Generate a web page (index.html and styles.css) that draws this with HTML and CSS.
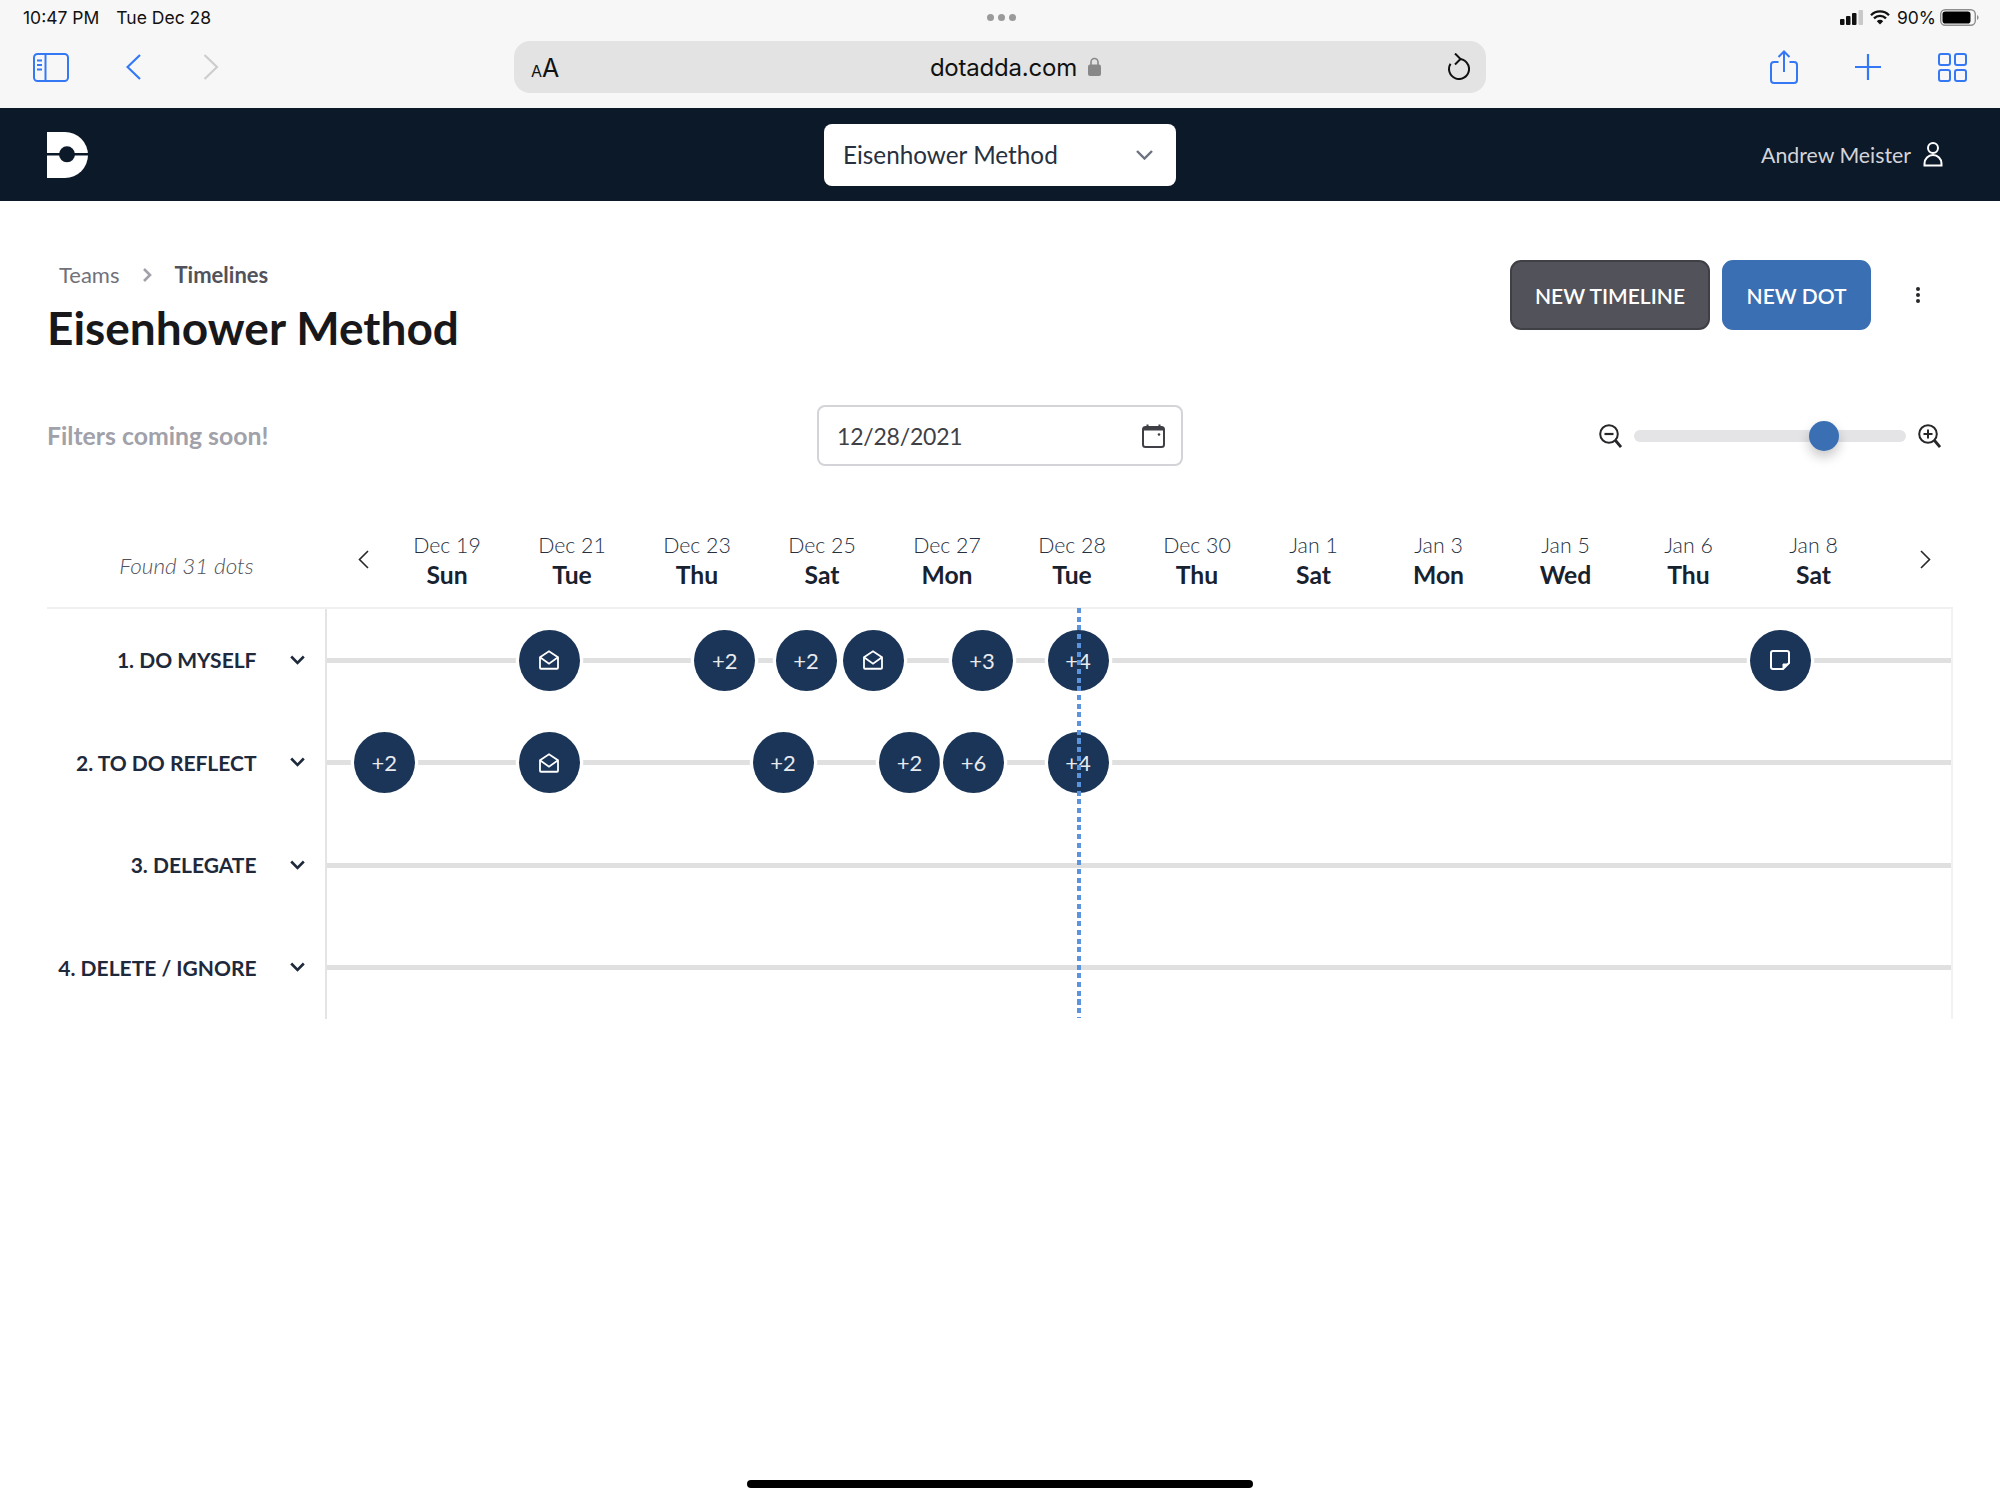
FILE: index.html
```html
<!DOCTYPE html>
<html lang="en">
<head>
<meta charset="utf-8">
<title>Eisenhower Method - DotAdda</title>
<link rel="stylesheet" href="styles.css">
</head>
<body>
<div class="page">
  <div class="chrome">
    <div class="status">
      <div class="status-left"><span>10:47 PM</span><span>Tue Dec 28</span></div>
      <div class="status-dots"><i></i><i></i><i></i></div>
      <div class="status-right">
        <svg class="ic-signal" viewBox="0 0 24 15"><rect x="0" y="9" width="4.5" height="6" rx="1" fill="#111"/><rect x="6" y="6" width="4.5" height="9" rx="1" fill="#111"/><rect x="12" y="3" width="4.5" height="12" rx="1" fill="#111"/><rect x="18.500" y="0" width="4.500" height="15" rx="1" fill="#c9c9c9"/></svg>
        <svg class="ic-wifi" viewBox="0 0 20 15"><path d="M1 5.200a12.700 12.700 0 0 1 18 0M4 8.400a8.400 8.400 0 0 1 12 0" fill="none" stroke="#111" stroke-width="2.300"/><path d="M6.800 11.200a4.500 4.500 0 0 1 6.400 0L10 14.600z" fill="#111"/></svg>
        <span class="battery-pct">90%</span>
        <svg class="ic-battery" viewBox="0 0 39 17"><rect x="0.700" y="0.700" width="34.600" height="15.600" rx="4.500" fill="none" stroke="#8e8e8e" stroke-width="1.400"/><rect x="2.500" y="2.500" width="28" height="12" rx="2.800" fill="#000"/><path d="M37 6v5a2.600 2.600 0 0 0 1.600-2.500A2.600 2.600 0 0 0 37 6z" fill="#8e8e8e"/></svg>
      </div>
    </div>
    <div class="toolbar">
      <div class="tools-left">
        <svg class="ic-sidebar" viewBox="0 0 36 29" fill="none" stroke="#3478f6" stroke-width="2"><rect x="1" y="1" width="34" height="27" rx="3.500"/><path d="M12.500 1v27"/><path d="M4 7.500h5M4 12h5M4 16.500h5" stroke-width="1.800"/></svg>
        <svg class="ic-back" viewBox="0 0 15 26" fill="none" stroke="#3478f6" stroke-width="2.200"><path d="M14 1 1.500 13 14 25"/></svg>
        <svg class="ic-forward" viewBox="0 0 16 26" fill="none" stroke="#cdcdcd" stroke-width="2.200"><path d="M1.500 1 14 13 1.500 25"/></svg>
      </div>
      <div class="urlbar">
        <span class="aa"><span class="aa-small">A</span><span class="aa-big">A</span></span>
        <span class="url"><span>dotadda.com</span>
          <svg class="ic-lock" viewBox="0 0 13 19"><path d="M3 8V5a3.500 3.500 0 0 1 7 0v3" fill="none" stroke="#888" stroke-width="1.600"/><rect x="0" y="7.500" width="13" height="11.500" rx="2" fill="#888"/></svg>
        </span>
        <svg class="ic-reload" viewBox="0 0 23 27" fill="none" stroke="#111" stroke-width="2"><path d="M12 6a10 10 0 1 1-8.500 4.800"/><path d="M8 0.500 13.500 6 8 11.500"/></svg>
      </div>
      <div class="tools-right">
        <svg class="ic-share" viewBox="0 0 28 34" fill="none" stroke="#3478f6" stroke-width="2"><path d="M8.500 12H4a3 3 0 0 0-3 3v15a3 3 0 0 0 3 3h20a3 3 0 0 0 3-3V15a3 3 0 0 0-3-3h-4.500"/><path d="M14 22V1.500M8.500 7 14 1.500 19.500 7"/></svg>
        <svg class="ic-plus" viewBox="0 0 26 26" fill="none" stroke="#3478f6" stroke-width="2.200"><path d="M13 0v26M0 13h26"/></svg>
        <svg class="ic-tabs" viewBox="0 0 29 29" fill="none" stroke="#3478f6" stroke-width="2"><rect x="1" y="1" width="11" height="11" rx="2"/><rect x="17" y="1" width="11" height="11" rx="2"/><rect x="1" y="17" width="11" height="11" rx="2"/><rect x="17" y="17" width="11" height="11" rx="2"/></svg>
      </div>
    </div>
  </div>

  <header class="nav">
    <div class="nav-left">
      <svg class="logo" viewBox="0 0 41 46"><path d="M0 0H18A23 23 0 0 1 18 46H0Z" fill="#fff"/><rect x="0" y="21" width="41" height="2.500" fill="#0c1929"/><circle cx="20" cy="22.300" r="8" fill="#0c1929"/></svg>
    </div>
    <div class="team-select"><span>Eisenhower Method</span>
      <svg class="ic-select" viewBox="0 0 17 10" fill="none" stroke="#6b7280" stroke-width="2.400"><path d="M1 1l7.500 7.500L16 1"/></svg>
    </div>
    <div class="nav-user"><span>Andrew Meister</span>
      <svg class="ic-user" viewBox="0 0 20 25" fill="none" stroke="#fff" stroke-width="2"><circle cx="10" cy="6" r="5"/><path d="M1.500 23.500v-2a8.500 8.500 0 0 1 17 0v2z"/></svg>
    </div>
  </header>

  <main class="main">
    <section class="head">
      <div>
        <nav class="crumbs"><span class="crumb">Teams</span>
          <svg class="ic-crumb" viewBox="0 0 9 14" fill="none" stroke="#a1a1aa" stroke-width="2.600"><path d="M1 1l6 6-6 6"/></svg>
          <span class="crumb crumb-current">Timelines</span></nav>
        <h1 class="title">Eisenhower Method</h1>
      </div>
      <div class="actions">
        <button class="btn btn-dark">NEW TIMELINE</button>
        <button class="btn btn-blue">NEW DOT</button>
        <svg class="ic-kebab" viewBox="0 0 4 16" fill="#27272a"><circle cx="2" cy="2" r="2"/><circle cx="2" cy="8" r="2"/><circle cx="2" cy="14" r="2"/></svg>
      </div>
    </section>

    <section class="filters">
      <div class="filters-note">Filters coming soon!</div>
      <div class="date-input"><span>12/28/2021</span>
        <svg class="ic-cal" viewBox="0 0 23 24" fill="none" stroke="#3f3f46" stroke-width="2"><rect x="1" y="3" width="21" height="20" rx="2.500"/><path d="M1 5h21" stroke-width="3"/><path d="M5.500 0.500v3M17.500 0.500v3"/><circle cx="17" cy="10.500" r="1.300" fill="#3f3f46" stroke="none"/></svg>
      </div>
      <div class="zoomer">
        <svg class="ic-zoom" viewBox="0 0 23 24" fill="none" stroke="#27272a" stroke-width="2"><circle cx="10" cy="10" r="8.800"/><path d="M5.500 10h9" stroke-width="2.200"/><path d="M16.500 16.500 22 23" stroke-width="2.800"/></svg>
        <div class="track"><span class="thumb"></span></div>
        <svg class="ic-zoom" viewBox="0 0 23 24" fill="none" stroke="#27272a" stroke-width="2"><circle cx="10" cy="10" r="8.800"/><path d="M5.500 10h9M10 5.500v9" stroke-width="2"/><path d="M16.500 16.500 22 23" stroke-width="2.800"/></svg>
      </div>
    </section>

    <section class="timeline">
      <div class="tl-head">
        <div class="found">Found 31 dots</div>
        <svg class="ic-page ic-page-prev" viewBox="0 0 11 19" fill="none" stroke="#27272a" stroke-width="1.600"><path d="M10 1 1.500 9.500 10 18"/></svg>
        <div class="days">
          <div class="day"><span class="day-date">Dec 19</span><span class="day-name">Sun</span></div>
          <div class="day"><span class="day-date">Dec 21</span><span class="day-name">Tue</span></div>
          <div class="day"><span class="day-date">Dec 23</span><span class="day-name">Thu</span></div>
          <div class="day"><span class="day-date">Dec 25</span><span class="day-name">Sat</span></div>
          <div class="day"><span class="day-date">Dec 27</span><span class="day-name">Mon</span></div>
          <div class="day"><span class="day-date">Dec 28</span><span class="day-name">Tue</span></div>
          <div class="day"><span class="day-date">Dec 30</span><span class="day-name">Thu</span></div>
          <div class="day"><span class="day-date">Jan 1</span><span class="day-name">Sat</span></div>
          <div class="day"><span class="day-date">Jan 3</span><span class="day-name">Mon</span></div>
          <div class="day"><span class="day-date">Jan 5</span><span class="day-name">Wed</span></div>
          <div class="day"><span class="day-date">Jan 6</span><span class="day-name">Thu</span></div>
          <div class="day"><span class="day-date">Jan 8</span><span class="day-name">Sat</span></div>
        </div>
        <svg class="ic-page ic-page-next" viewBox="0 0 11 19" fill="none" stroke="#27272a" stroke-width="1.600"><path d="M1 1 9.500 9.500 1 18"/></svg>
      </div>
      <div class="tl-body">
        <div class="row">
          <div class="row-label"><span>1. DO MYSELF</span><svg class="ic-row" viewBox="0 0 15 10" fill="none" stroke="#1e293b" stroke-width="2.600"><path d="M1.200 1.500 7.500 8l6.300-6.500"/></svg></div>
          <div class="row-track">
            <span class="dot" style="left:222.5px"><svg class="ic-dot" viewBox="2 2 20 19.500" fill="none" stroke="#fff" stroke-width="1.800"><path d="M3 19.500V9l9-6 9 6v10.500a1 1 0 0 1-1 1H4a1 1 0 0 1-1-1z"/><path d="M3 9l9 6.500L21 9"/></svg></span>
            <span class="dot" style="left:398.2px">+2</span>
            <span class="dot" style="left:479.5px">+2</span>
            <span class="dot" style="left:546.5px"><svg class="ic-dot" viewBox="2 2 20 19.500" fill="none" stroke="#fff" stroke-width="1.800"><path d="M3 19.500V9l9-6 9 6v10.500a1 1 0 0 1-1 1H4a1 1 0 0 1-1-1z"/><path d="M3 9l9 6.500L21 9"/></svg></span>
            <span class="dot" style="left:655.5px">+3</span>
            <span class="dot" style="left:751.5px">+4</span>
            <span class="dot" style="left:1453.8px"><svg class="ic-dot" viewBox="0 0 20 20" fill="none" stroke="#fff" stroke-width="2"><path d="M3 1h14a2 2 0 0 1 2 2v10l-6 6H3a2 2 0 0 1-2-2V3a2 2 0 0 1 2-2z"/><path d="M13 14h5l-5 5z" fill="#fff" stroke-width="1"/></svg></span>
          </div>
        </div>
        <div class="row">
          <div class="row-label"><span>2. TO DO REFLECT</span><svg class="ic-row" viewBox="0 0 15 10" fill="none" stroke="#1e293b" stroke-width="2.600"><path d="M1.200 1.500 7.500 8l6.300-6.500"/></svg></div>
          <div class="row-track">
            <span class="dot" style="left:57.8px">+2</span>
            <span class="dot" style="left:222.5px"><svg class="ic-dot" viewBox="2 2 20 19.500" fill="none" stroke="#fff" stroke-width="1.800"><path d="M3 19.500V9l9-6 9 6v10.500a1 1 0 0 1-1 1H4a1 1 0 0 1-1-1z"/><path d="M3 9l9 6.500L21 9"/></svg></span>
            <span class="dot" style="left:456.5px">+2</span>
            <span class="dot" style="left:583.1px">+2</span>
            <span class="dot" style="left:647px">+6</span>
            <span class="dot" style="left:751.5px">+4</span>
          </div>
        </div>
        <div class="row">
          <div class="row-label"><span>3. DELEGATE</span><svg class="ic-row" viewBox="0 0 15 10" fill="none" stroke="#1e293b" stroke-width="2.600"><path d="M1.200 1.500 7.500 8l6.300-6.500"/></svg></div>
          <div class="row-track"></div>
        </div>
        <div class="row">
          <div class="row-label"><span>4. DELETE / IGNORE</span><svg class="ic-row" viewBox="0 0 15 10" fill="none" stroke="#1e293b" stroke-width="2.600"><path d="M1.200 1.500 7.500 8l6.300-6.500"/></svg></div>
          <div class="row-track"></div>
        </div>
        <div class="today-line"></div>
      </div>
    </section>
  </main>
  <div class="home-bar"></div>
</div>
</body>
</html>
```
FILE: styles.css
```css
* { box-sizing: border-box; }
html, body { margin: 0; padding: 0; background: #fff; }
svg { display: block; flex: none; }

.page {
  position: relative;
  width: 2000px;
  height: 1499px;
  overflow: hidden;
  background: #fff;
  font-family: Lato, "Noto Sans", sans-serif;
  color: #1e293b;
}

/* Safari chrome */
.chrome { height: 108px; background: #f7f7f7; font-family: Inter, Roboto, sans-serif; }
.status {
  height: 34px;
  display: grid;
  grid-template-columns: 1fr auto 1fr;
  align-items: center;
  padding: 0 21px 0 23px;
  font-size: 17.500px;
  color: #111;
}
.status-left { display: flex; gap: 17px; }
.status-dots { display: flex; gap: 4px; }
.status-dots i { width: 7px; height: 7px; border-radius: 50%; background: #9a9a9a; }
.status-right { display: flex; align-items: center; justify-content: flex-end; }
.ic-signal { width: 24px; height: 15px; }
.ic-wifi { width: 20px; height: 15px; margin-left: 6px; }
.battery-pct { margin-left: 7px; }
.ic-battery { width: 39px; height: 17px; margin-left: 4px; }

.toolbar {
  height: 52px;
  margin-top: 7px;
  display: grid;
  grid-template-columns: 514px 972px 514px;
  align-items: center;
}
.tools-left { display: flex; align-items: center; padding-left: 33px; }
.ic-sidebar { width: 36px; height: 29px; }
.ic-back { width: 15px; height: 26px; margin-left: 57px; }
.ic-forward { width: 16px; height: 26px; margin-left: 62px; }
.urlbar {
  position: relative;
  height: 52px;
  border-radius: 16px;
  background: #e3e3e3;
  display: grid;
  grid-template-columns: 1fr auto 1fr;
  align-items: center;
  padding: 0 16px 0 17px;
  color: #111;
}
.aa { display: flex; align-items: baseline; line-height: 1; padding-top: 2px; }
.aa-small { font-size: 16px; }
.aa-big { font-size: 25px; }
.url { display: flex; align-items: center; padding-left: 30px; font-size: 24px; letter-spacing: -0.2px; }
.ic-lock { width: 13px; height: 19px; margin-left: 11px; margin-bottom: 2px; }
.ic-reload { width: 23px; height: 27px; justify-self: end; margin-bottom: 1px; }
.tools-right { position: relative; display: flex; align-items: center; padding-left: 284px; }
.ic-share { width: 28px; height: 34px; margin-bottom: 1px; }
.ic-plus { width: 26px; height: 26px; margin-left: 57px; }
.ic-tabs { width: 29px; height: 29px; margin-left: 57px; }

/* App nav */
.nav {
  height: 93px;
  background: #0c1929;
  display: grid;
  grid-template-columns: 1fr 352px 1fr;
  align-items: center;
  padding: 0 57px;
}
.nav-left { margin-left: -10px; }
.logo { width: 41px; height: 46px; margin-top: 1px; }
.team-select {
  height: 62px;
  border-radius: 8px;
  background: #fff;
  display: flex;
  align-items: center;
  justify-content: space-between;
  padding: 0 23px 0 19px;
  font-size: 24.300px;
  color: #27303f;
}
.ic-select { width: 17px; height: 10px; }
.nav-user {
  display: flex;
  align-items: center;
  justify-content: flex-end;
  gap: 12px;
  font-size: 21.300px;
  color: #d4d4d8;
}
.ic-user { width: 20px; height: 25px; }

/* Main */
.main { padding: 60px 47px 0; }
.head { display: flex; justify-content: space-between; align-items: flex-start; }
.crumbs { display: flex; align-items: center; height: 27px; padding-left: 12px; font-size: 22px; }
.crumb { color: #71717a; }
.crumb-current { color: #52525b; font-weight: 700; }
.ic-crumb { width: 9px; height: 14px; margin: 0 22px 0 24px; }
.title { margin: 13px 0 0; font-size: 46px; line-height: 54px; font-weight: 700; color: #18181b; }
.actions { display: flex; align-items: center; margin-top: -1px; padding-right: 33px; }
.btn {
  height: 70px;
  padding: 0;
  border-radius: 11px;
  font: 600 21px Lato, sans-serif;
  color: #fff;
}
.btn-dark { width: 200px; background: #52525b; border: 2px solid #3f3f46; }
.btn-blue { width: 149px; margin-left: 12px; background: #3b6fb3; border: 2px solid #3b6fb3; }
.ic-kebab { width: 4px; height: 16px; margin-left: 45px; }

.filters {
  margin-top: 50px;
  display: grid;
  grid-template-columns: 1fr 366px 1fr;
  align-items: center;
}
.filters-note { font-size: 24.800px; font-weight: 700; color: #a1a1aa; }
.date-input {
  height: 61px;
  border: 2px solid #d4d4d8;
  border-radius: 8px;
  display: flex;
  align-items: center;
  justify-content: space-between;
  padding: 0 16px 0 18px;
  font-size: 23px;
  letter-spacing: -0.2px;
  color: #3f3f46;
}
.ic-cal { width: 23px; height: 24px; }
.zoomer { display: flex; align-items: center; justify-content: flex-end; gap: 12px; padding-right: 12px; }
.ic-zoom { width: 23px; height: 24px; }
.track { position: relative; width: 272px; height: 12px; border-radius: 6px; background: #e4e4e7; }
.thumb {
  position: absolute;
  left: 175px;
  top: -9px;
  width: 30px;
  height: 30px;
  border-radius: 50%;
  background: #3b6fb3;
  box-shadow: 0 6px 12px rgba(0, 0, 0, .22);
}

/* Timeline */
.timeline { margin-top: 64px; }
.tl-head { display: flex; height: 78.500px; border-bottom: 2px solid #f0f0f0; }
.found { width: 206.600px; margin-top: 21px; font-size: 22.500px; line-height: 30px; font-style: italic; font-weight: 300; color: #52525b; text-align: right; }
.ic-page { width: 11px; height: 19px; margin-top: 20px; }
.ic-page-prev { margin-left: 104.400px; }
.ic-page-next { margin-left: 49px; }
.days {
  margin-left: 15.500px;
  display: grid;
  grid-template-columns: repeat(7, 125px) 108px 142px 112px 134px 116px;
}
.day { display: flex; flex-direction: column; align-items: center; white-space: nowrap; }
.day-date { font-size: 21.300px; line-height: 30px; font-weight: 300; color: #27303f; }
.day-name { font-size: 24.700px; line-height: 30px; font-weight: 700; color: #18222f; }

.tl-body { position: relative; }
.row { display: flex; height: 102.500px; }
.row-label {
  width: 277.500px;
  display: flex;
  align-items: center;
  justify-content: flex-end;
  padding-right: 20px;
  font-size: 21px;
  font-weight: 700;
  color: #1e293b;
}
.ic-row { width: 15px; height: 10px; margin-left: 33px; }
.row-track {
  position: relative;
  flex: 1;
  border-left: 2px solid #e4e4e7;
  border-right: 2px solid #f2f2f2;
}
.row-track::before {
  content: "";
  position: absolute;
  left: 0;
  right: 0;
  top: 49px;
  height: 5px;
  background: #e0e0e0;
}
.dot {
  position: absolute;
  top: 21px;
  width: 61px;
  height: 61px;
  margin-left: -30.500px;
  border-radius: 50%;
  background: #1a3557;
  box-shadow: 0 0 0 3.300px #fff;
  display: flex;
  align-items: center;
  justify-content: center;
  font-size: 22px;
  font-weight: 400;
  color: #e8eaee;
}
.ic-dot { width: 20px; height: 20px; }
.today-line {
  position: absolute;
  left: 1030px;
  top: -1px;
  width: 4px;
  height: 410px;
  background: repeating-linear-gradient(to bottom, #5b94dc 0, #5b94dc 5px, transparent 5px, transparent 8.700px);
}
.home-bar {
  position: absolute;
  left: 747px;
  top: 1480px;
  width: 506px;
  height: 8px;
  border-radius: 4px;
  background: #000;
}
```
